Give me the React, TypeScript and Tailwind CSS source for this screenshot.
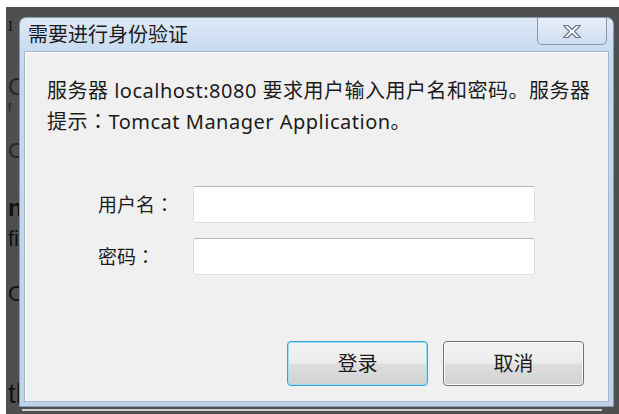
import { useState } from 'react'

// fragments of the page that sits behind the dimmed backdrop
const leftBits = [
    { text: 'I', top: 'mt-[12px]', cls: "font-['Liberation_Serif',serif] text-[15px]" },
    { text: 'C', top: 'mt-[41px]', cls: 'text-[24px] text-[#262626]' },
    { text: 'f', top: 'mt-[3px]', cls: 'text-[12px] text-[#262626]' },
    { text: 'C', top: 'mt-[26px]', cls: 'text-[22px] text-[#262626]' },
    { text: 'ng', top: 'mt-[34px]', cls: 'text-[24px] font-bold' },
    { text: 'fi', top: 'mt-[8px]', cls: 'text-[22px]' },
    { text: 'O', top: 'mt-[33px]', cls: 'text-[22px]' },
    { text: 'tl', top: 'mt-[75px]', cls: 'text-[28px]' },
]

function CloseGlyph() {
    return (
        <svg width="22" height="15" viewBox="0 0 22 15">
            <polygon
                points="2.5,1.5 7,1.5 11,5.5 15,1.5 19.5,1.5 13.5,7.5 19.5,13.5 15,13.5 11,9.5 7,13.5 2.5,13.5 8.5,7.5"
                fill="#ffffff"
                stroke="#6d7888"
                strokeWidth="1.2"
                strokeLinejoin="round"
            />
        </svg>
    )
}

// full-width colon, centred in its cell
const Colon = () => <span className="font-['Noto_Sans_CJK_TC',sans-serif]">：</span>

export default function App() {
    const [user, setUser] = useState('')
    const [pass, setPass] = useState('')

    return (
        <div className="relative h-[414px] w-[619px] overflow-hidden bg-white font-['Liberation_Sans',sans-serif]">
            {/* dimmed page */}
            <div className="ml-[6px] mt-[7px] flex h-[407px] flex-col bg-[#4f4f4f] pl-[2px] leading-none text-[#121212]">
                {leftBits.map((b, i) => (
                    <span key={i} className={`${b.top} ${b.cls}`}>
                        {b.text}
                    </span>
                ))}
                <div className="mt-auto mb-[3px] ml-[14px] h-[2px] w-[580px] bg-[#cfcfcf]" />
            </div>

            {/* auth dialog */}
            <div className="absolute left-[19px] top-[17px] flex h-[390px] w-[595px] flex-col rounded-t-[7px] border border-[#8a99ad] bg-[linear-gradient(to_bottom,#dce9f7,#c5d8ef_40px,#bed2ec)] font-['Noto_Sans','Noto_Sans_CJK_SC',sans-serif] text-[#1c1c1c]">
                <div className="relative flex h-[33px] items-center pl-[8px] text-[20px] leading-none">
                    需要进行身份验证
                    <button className="absolute right-[6px] top-0 flex h-[27px] w-[70px] items-center justify-center rounded-b-[5px] border border-t-0 border-[#8a98aa] bg-[linear-gradient(to_bottom,#e6eef8,#cfdef1)]">
                        <CloseGlyph />
                    </button>
                </div>

                <div className="mx-[4px] mb-[4px] flex flex-1 flex-col border border-[#a3b7cf] bg-[#f0f0f0] pl-[22px] pr-[20px] pt-[24px] shadow-[inset_1px_1px_0_#ffffff]">
                    <p className="whitespace-nowrap text-[20px] leading-[30px] tracking-[0.5px]">
                        服务器 localhost:8080 要求用户输入用户名和密码。服务器
                        <br />
                        提示<Colon />Tomcat Manager Application。
                    </p>

                    <div className="ml-[51px] mt-[49px] flex flex-col gap-[15px]">
                        <div className="flex items-center">
                            <label className="w-[95px] text-[19px]">
                                用户名<Colon />
                            </label>
                            <input
                                value={user}
                                onChange={(e) => setUser(e.target.value)}
                                className="h-[37px] w-[342px] rounded-[2px] border border-[#dde1e6] border-t-[#b3b5bb] bg-white px-2 outline-none"
                            />
                        </div>
                        <div className="flex items-center">
                            <label className="w-[95px] text-[19px]">
                                密码<Colon />
                            </label>
                            <input
                                type="password"
                                value={pass}
                                onChange={(e) => setPass(e.target.value)}
                                className="h-[37px] w-[342px] rounded-[2px] border border-[#dde1e6] border-t-[#b3b5bb] bg-white px-2 outline-none"
                            />
                        </div>
                    </div>

                    <div className="mt-[66px] mr-[4px] flex justify-end gap-[15px]">
                        <button className="h-[45px] w-[141px] rounded-[4px] border border-[#36a2dc] bg-[linear-gradient(to_bottom,#f3f3f3_0%,#ececec_48%,#dedede_52%,#d2d2d2_100%)] text-[20px] shadow-[inset_0_0_0_1px_#9fdcf6]">
                            登录
                        </button>
                        <button className="h-[45px] w-[141px] rounded-[4px] border border-[#727272] bg-[linear-gradient(to_bottom,#f3f3f3_0%,#ececec_48%,#dedede_52%,#d2d2d2_100%)] text-[20px] shadow-[inset_0_0_0_1px_#fafafa]">
                            取消
                        </button>
                    </div>
                </div>
            </div>
        </div>
    )
}
